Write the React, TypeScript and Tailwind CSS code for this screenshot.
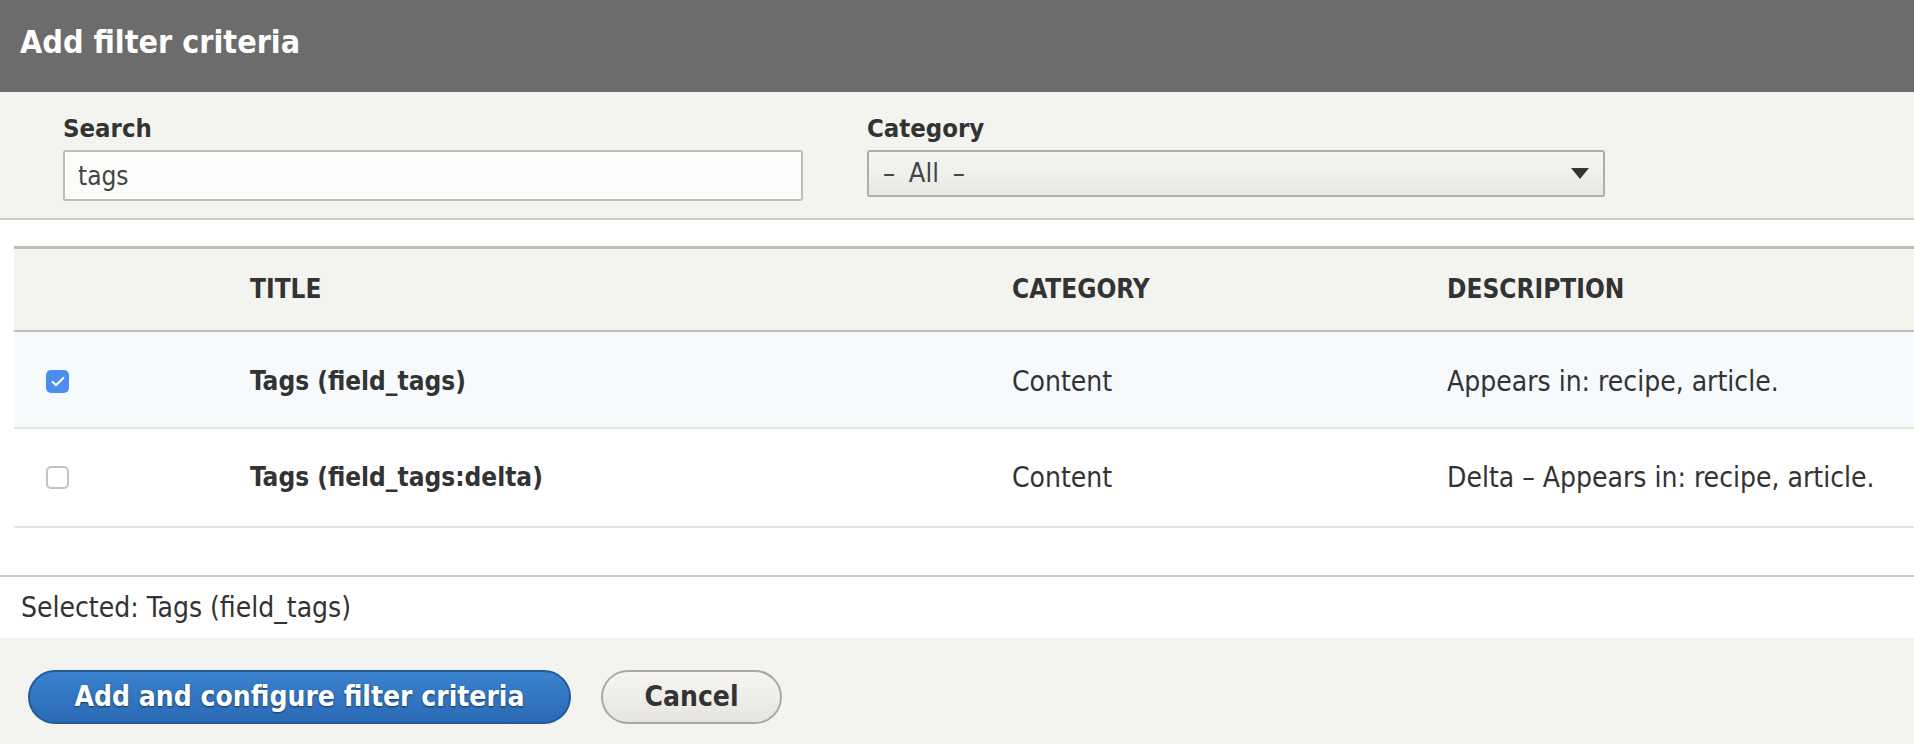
import { Check } from "lucide-react";

const FONT = "font-['DejaVu_Sans_Condensed','DejaVu_Sans',sans-serif] [font-stretch:condensed]";

type Row = {
  title: string;
  category: string;
  description: string;
  checked: boolean;
};

const ROWS: Row[] = [
  { title: "Tags (field_tags)", category: "Content", description: "Appears in: recipe, article.", checked: true },
  { title: "Tags (field_tags:delta)", category: "Content", description: "Delta – Appears in: recipe, article.", checked: false },
];

function Checkbox({ checked }: { checked: boolean }) {
  if (checked) {
    return (
      <span className="flex h-[23px] w-[23px] items-center justify-center rounded-[5px] bg-[#4b8ef2]">
        <Check className="h-[16px] w-[16px] text-white" strokeWidth={3.2} />
      </span>
    );
  }
  return <span className="block h-[23px] w-[23px] rounded-[5px] border-2 border-[#c4c4c4] bg-white" />;
}

function TableRow({ row }: { row: Row }) {
  return (
    <div
      className={`grid grid-cols-[236px_762px_435px_1fr] items-center border-b-2 border-[#e6e5e0] ${
        row.checked ? "h-[97px] bg-[#f7fafd] pt-1" : "h-[99px] bg-white"
      }`}
    >
      <div className="pl-[32px]">
        <Checkbox checked={row.checked} />
      </div>
      <div className="text-[26px] font-bold text-[#333]">{row.title}</div>
      <div className="text-[28px] text-[#333]">{row.category}</div>
      <div className="whitespace-nowrap text-[28px] text-[#333]">{row.description}</div>
    </div>
  );
}

export default function App() {
  return (
    <div className={`flex h-[744px] w-full flex-col overflow-hidden bg-white ${FONT}`}>
      <div className="flex h-[92px] items-center bg-[#6c6c6c] px-[20px] pb-[9px]">
        <h1 className="text-[32px] font-bold text-white">Add filter criteria</h1>
      </div>

      <div className="flex h-[128px] gap-[64px] border-b-2 border-[#cbcbc6] bg-[#f3f3ef] px-[63px] pt-[21px]">
        <div className="flex w-[740px] flex-col">
          <label className="text-[25.5px] leading-[30px] font-bold text-[#333]">Search</label>
          <input
            readOnly
            value="tags"
            className="mt-[7px] h-[51px] rounded-[3px] border-2 border-[#bdbdb8] bg-[#fcfcfa] px-[13px] text-[26px] text-[#444] outline-none"
          />
        </div>
        <div className="flex w-[738px] flex-col">
          <label className="text-[25.5px] leading-[30px] font-bold text-[#333]">Category</label>
          <div className="mt-[7px] flex h-[47px] items-center justify-between rounded-[3px] border-2 border-[#adadaa] bg-linear-to-b from-[#f6f6f3] to-[#e8e8e3] pr-[14px] pl-[14px]">
            <span className="text-[27px] text-[#444] [word-spacing:6px]">– All –</span>
            <svg width="18" height="11" viewBox="0 0 18 11">
              <path d="M0 0 H18 L9 11 Z" fill="#333" />
            </svg>
          </div>
        </div>
      </div>

      <div className="mt-[26px] ml-[14px] border-t-[3px] border-[#bebeb9]">
        <div className="grid h-[83px] grid-cols-[236px_762px_435px_1fr] items-center border-b-2 border-[#bfbfba] bg-[#f3f3ef] text-[26px] font-bold text-[#333] uppercase">
          <div />
          <div>Title</div>
          <div>Category</div>
          <div>Description</div>
        </div>
        {ROWS.map((row) => (
          <TableRow key={row.title} row={row} />
        ))}
      </div>

      <div className="mt-[47px] flex h-[63px] items-center border-t-2 border-[#cccccc] px-[21px] text-[28px] text-[#333]">
        Selected: Tags (field_tags)
      </div>

      <div className="flex flex-1 gap-[30px] bg-[#f3f3ef] px-[28px] pt-[32px]">
        <button
          type="button"
          className="flex h-[54px] w-[543px] items-center justify-center rounded-full border-2 border-[#24599a] bg-linear-to-b from-[#3a82cf] to-[#2a6ab5] text-[28px] font-bold text-white [text-shadow:0_1px_2px_rgba(0,0,0,0.55)]"
        >
          Add and configure filter criteria
        </button>
        <button
          type="button"
          className="flex h-[54px] w-[181px] items-center justify-center rounded-full border-2 border-[#a8a8a8] bg-linear-to-b from-[#f6f5f1] to-[#e6e5df] text-[28px] font-bold text-[#333]"
        >
          Cancel
        </button>
      </div>
    </div>
  );
}
